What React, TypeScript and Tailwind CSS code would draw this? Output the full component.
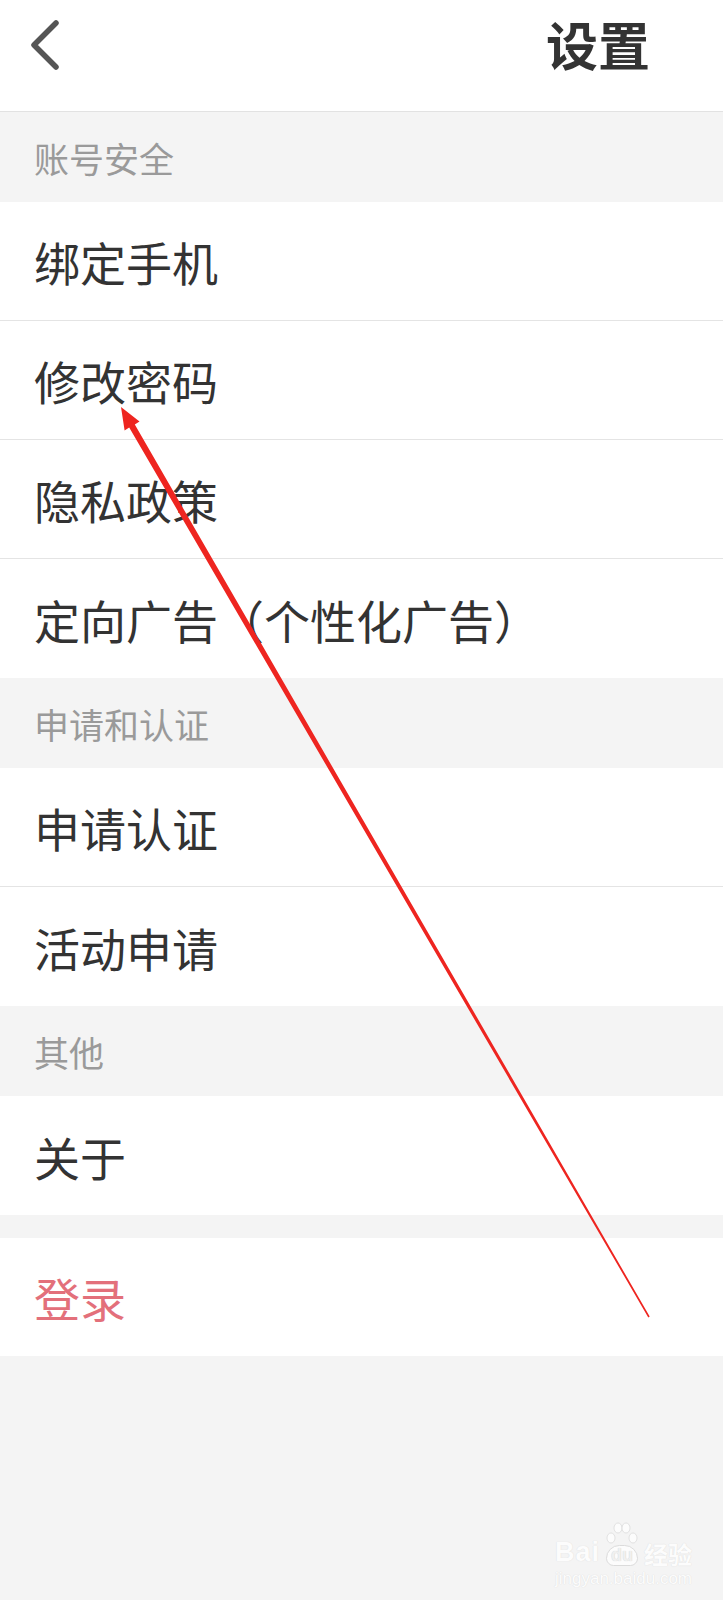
import React from "react";

const FONT = '"Noto Sans CJK SC", "Noto Sans", sans-serif';

function Section({ title }: { title: string }) {
  return (
    <div className="h-[90px] flex items-center pl-[34px] bg-[#f4f4f4]">
      <span className="text-[35px] text-[#9a9a9a] leading-none">{title}</span>
    </div>
  );
}

function Row({ label, last }: { label: string; last?: boolean }) {
  return (
    <div
      className={
        "h-[119px] flex items-center pl-[34px] bg-white " +
        (last ? "" : "border-b border-[#e4e4e4]")
      }
    >
      <span className="text-[46px] text-[#333333] leading-none">{label}</span>
    </div>
  );
}

export default function App() {
  return (
    <div
      className="relative w-full h-[1600px] overflow-hidden bg-[#f4f4f4]"
      style={{ fontFamily: FONT }}
    >
      {/* Header */}
      <div className="h-[112px] bg-white border-b border-[#e2e2e2]">
        <div className="h-[88px] flex items-center justify-between pl-[27px] pr-[73px]">
          <svg width="34" height="52" viewBox="0 0 34 52" className="mt-[2px]">
            <path
              d="M29 4 L7 26 L29 48"
              fill="none"
              stroke="#555555"
              strokeWidth="5.5"
              strokeLinecap="round"
              strokeLinejoin="round"
            />
          </svg>
          <span className="text-[52px] font-bold text-[#333333] leading-none">设置</span>
        </div>
      </div>

      <Section title="账号安全" />
      <Row label="绑定手机" />
      <Row label="修改密码" />
      <Row label="隐私政策" />
      <Row label="定向广告（个性化广告）" last />

      <Section title="申请和认证" />
      <Row label="申请认证" />
      <Row label="活动申请" last />

      <Section title="其他" />
      <Row label="关于" last />

      <div className="h-[23px]" />
      <div className="h-[118px] flex items-center pl-[34px] bg-white">
        <span className="text-[46px] text-[#e3707b] leading-none">登录</span>
      </div>

      {/* Red annotation arrow */}
      <svg
        className="absolute left-0 top-0 pointer-events-none"
        width="723"
        height="1600"
        viewBox="0 0 723 1600"
      >
        <polygon
          points="121,407 139.5,421.6 134.8,424.6 649.7,1316.6 648.3,1317.4 129.2,427.6 124.6,430.4"
          fill="#ee2520"
        />
      </svg>

      {/* Baidu watermark */}
      <div className="absolute left-[555px] top-[1522px] flex flex-col items-start pointer-events-none opacity-80">
        <div className="flex items-end">
          <span
            className="text-[27px] font-bold text-white leading-none tracking-[1px] [text-shadow:0_0_1px_#cfcfcf]"
            style={{ fontFamily: '"Liberation Sans", sans-serif' }}
          >
            Bai
          </span>
          <div className="relative ml-[3px] flex flex-col items-center">
            <svg width="38" height="26" viewBox="0 0 38 26" className="mb-[-3px]">
              <ellipse cx="8" cy="16" rx="4" ry="5" fill="#fff" stroke="#d6d6d6" strokeWidth="0.8" />
              <ellipse cx="15" cy="6" rx="4" ry="5" fill="#fff" stroke="#d6d6d6" strokeWidth="0.8" />
              <ellipse cx="23" cy="6" rx="4" ry="5" fill="#fff" stroke="#d6d6d6" strokeWidth="0.8" />
              <ellipse cx="30" cy="16" rx="4" ry="5" fill="#fff" stroke="#d6d6d6" strokeWidth="0.8" />
            </svg>
            <span
              className="rounded-t-[14px] rounded-b-[8px] border border-[#d6d6d6] bg-white px-[4px] text-[18px] font-bold text-[#f0f0f0] leading-[19px] [text-shadow:0_0_1px_#bdbdbd]"
              style={{ fontFamily: '"Liberation Sans", sans-serif' }}
            >
              du
            </span>
          </div>
          <span className="ml-[3px] text-[24px] font-bold text-white leading-none [text-shadow:0_0_1px_#cfcfcf]">
            经验
          </span>
        </div>
        <span
          className="mt-[4px] text-[17px] text-white leading-none [text-shadow:0_0_1px_#cfcfcf]"
          style={{ fontFamily: '"Liberation Sans", sans-serif' }}
        >
          jingyan.baidu.com
        </span>
      </div>
    </div>
  );
}
